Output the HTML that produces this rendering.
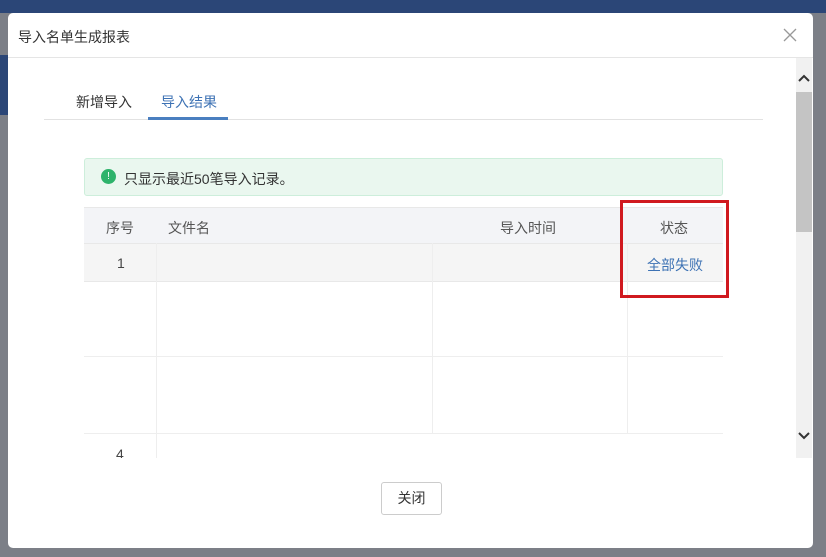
<!DOCTYPE html><html><head><meta charset="utf-8"><style>
body{margin:0;width:826px;height:557px;background:#7c7f87;position:relative;overflow:hidden;font-family:"Liberation Sans","Noto Sans CJK SC",sans-serif;}
.a{position:absolute}
</style></head><body>
<div class="a" style="left:0;top:0;width:826px;height:13px;background:#2b4677"></div>
<div class="a" style="left:0;top:55px;width:8px;height:60px;background:#2b4677"></div>
<div class="a" style="left:8px;top:13px;width:805px;height:535px;background:#fff;border-radius:5px;"></div>
<div class="a" style="left:18px;top:27px;font-size:14px;color:#333">导入名单生成报表</div>
<svg class="a" style="left:782px;top:27px" width="16" height="16"><path d="M2 2L14 14M14 2L2 14" stroke="#999" stroke-width="1.3"/></svg>
<div class="a" style="left:8px;top:57px;width:805px;height:1px;background:#e5e5e5"></div>
<div class="a" style="left:796px;top:58px;width:16px;height:400px;background:#f1f1f1"></div>
<div class="a" style="left:796px;top:92px;width:16px;height:140px;background:#c4c4c4"></div>
<svg class="a" style="left:797px;top:72px" width="14" height="12"><path d="M2 9L7 4L12 9" stroke="#333" stroke-width="2" fill="none"/></svg>
<svg class="a" style="left:797px;top:430px" width="14" height="12"><path d="M2 3L7 8L12 3" stroke="#333" stroke-width="2" fill="none"/></svg>
<div class="a" style="left:76px;top:92px;font-size:14px;color:#333">新增导入</div>
<div class="a" style="left:161px;top:92px;font-size:14px;color:#3d72b4">导入结果</div>
<div class="a" style="left:44px;top:119px;width:719px;height:1px;background:#e2e2e2"></div>
<div class="a" style="left:148px;top:117px;width:80px;height:3px;background:#4a7fc0"></div>
<div class="a" style="left:84px;top:158px;width:637px;height:36px;background:#eaf7ef;border:1px solid #cdeedb;border-radius:3px"></div>
<div class="a" style="left:101px;top:169px;width:15px;height:15px;border-radius:50%;background:#2eb36b;color:#fff;font-size:10px;text-align:center;line-height:15px">!</div>
<div class="a" style="left:124px;top:169px;font-size:14px;color:#333">只显示最近50笔导入记录。</div>
<div class="a" style="left:84px;top:207px;width:639px;height:36px;background:#f3f4f7;border-top:1px solid #e8e8e8"></div>
<div class="a" style="left:84px;top:243px;width:639px;height:37px;background:#f5f5f5;border-top:1px solid #e8e8e8;border-bottom:1px solid #e8e8e8"></div>
<div class="a" style="left:84px;top:356px;width:639px;height:1px;background:#eee"></div>
<div class="a" style="left:84px;top:433px;width:639px;height:1px;background:#eee"></div>
<div class="a" style="left:156px;top:243px;width:1px;height:215px;background:#eee"></div>
<div class="a" style="left:432px;top:243px;width:1px;height:190px;background:#eee"></div>
<div class="a" style="left:627px;top:243px;width:1px;height:190px;background:#eee"></div>
<div class="a" style="left:106px;top:218px;font-size:14px;color:#555">序号</div>
<div class="a" style="left:168px;top:218px;font-size:14px;color:#555">文件名</div>
<div class="a" style="left:500px;top:218px;font-size:14px;color:#555">导入时间</div>
<div class="a" style="left:660px;top:218px;font-size:14px;color:#555">状态</div>
<div class="a" style="left:117px;top:255px;font-size:14px;color:#444">1</div>
<div class="a" style="left:647px;top:255px;font-size:14px;color:#3d72b4">全部失败</div>
<div class="a" style="left:116px;top:446px;font-size:14px;color:#444">4</div>
<div class="a" style="left:84px;top:458px;width:712px;height:20px;background:#fff"></div>
<div class="a" style="left:620px;top:200px;width:103px;height:92px;border:3px solid #d0191f"></div>
<div class="a" style="left:381px;top:482px;width:59px;height:31px;border:1px solid #ccc;border-radius:3px;font-size:14px;color:#333;text-align:center;line-height:31px">关闭</div>
</body></html>
